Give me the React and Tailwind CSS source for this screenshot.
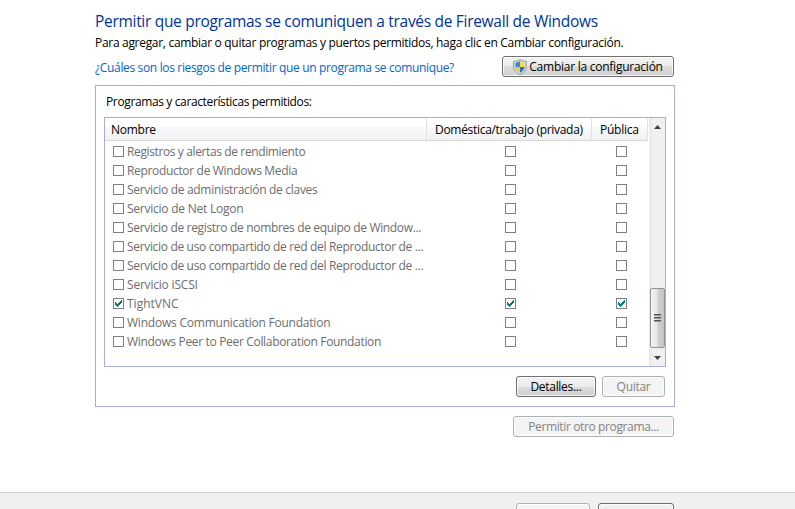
const rows = [
  { name: 'Registros y alertas de rendimiento', track: 'tracking-[-0.38px]' },
  { name: 'Reproductor de Windows Media', track: 'tracking-[-0.33px]' },
  { name: 'Servicio de administración de claves', track: 'tracking-[-0.3px]' },
  { name: 'Servicio de Net Logon', track: 'tracking-[-0.24px]' },
  { name: 'Servicio de registro de nombres de equipo de Window...', track: 'tracking-[-0.33px]' },
  { name: 'Servicio de uso compartido de red del Reproductor de ...', track: 'tracking-[-0.33px]' },
  { name: 'Servicio de uso compartido de red del Reproductor de ...', track: 'tracking-[-0.33px]' },
  { name: 'Servicio iSCSI', track: 'tracking-[-0.2px]' },
  { name: 'TightVNC', track: 'tracking-[0px]', checked: true },
  { name: 'Windows Communication Foundation', track: 'tracking-[-0.22px]' },
  { name: 'Windows Peer to Peer Collaboration Foundation', track: 'tracking-[-0.33px]' },
];

function Box({ checked }) {
  return (
    <span className="block h-[11px] w-[11px] shrink-0 border border-[#808080] bg-white">
      {checked && (
        <svg viewBox="0 0 9 9" className="block h-[9px] w-[9px]" shapeRendering="crispEdges" fill="#008080">
          <path d="M1 3h1v3h-1zM2 4h1v3h-1zM3 5h1v3h-1zM4 4h1v3h-1zM5 3h1v3h-1zM6 2h1v3h-1zM7 1h1v3h-1z" />
        </svg>
      )}
    </span>
  );
}

function Shield() {
  return (
    <svg viewBox="0 0 14 16" className="h-4 w-[14px] shrink-0">
      <path d="M7 .5C5.200 1.700 3 2.300.6 2.300v5C.6 11 3.200 13.900 7 15.500c3.800-1.600 6.400-4.500 6.400-8.200v-5C11 2.300 8.800 1.700 7 .5z" fill="#d5dade" stroke="#8b949c" strokeWidth=".9" />
      <path d="M7 2.300C5.600 3.200 4.200 3.600 2.500 3.700V8H7z" fill="#2f8ce0" />
      <path d="M7 2.300c1.400.9 2.800 1.300 4.500 1.400V8H7z" fill="#fbd840" />
      <path d="M2.500 8c.3 2.500 1.900 4.400 4.500 5.700V8z" fill="#f8ca2c" />
      <path d="M11.500 8c-.3 2.500-1.900 4.400-4.500 5.700V8z" fill="#1f74cc" />
    </svg>
  );
}

const enabled = 'border-[#707070] bg-[linear-gradient(#f2f2f2,#ebebeb_50%,#dddddd_50%,#cfcfcf)] text-black';
const disabled = 'border-[#adb2b5] bg-[#f4f4f4] text-[#838383]';

function Button({ off, className, children }) {
  return (
    <button className={`flex h-[21px] shrink-0 items-center justify-center rounded-[3px] border whitespace-nowrap shadow-[inset_0_0_0_1px_rgba(255,255,255,0.75)] ${off ? disabled : enabled} ${className}`}>
      {children}
    </button>
  );
}

export default function App() {
  return (
    <div className="flex h-[509px] w-[795px] flex-col overflow-hidden bg-white font-['Open_Sans','Noto_Sans',sans-serif] text-[12px] leading-[19px] text-black">
      <main className="flex h-[492px] shrink-0 flex-col pl-[95px]">
        <h1 className="mt-[9px] h-6 text-[15.5px] leading-6 tracking-[-0.3px] whitespace-nowrap text-[#003399]">
          Permitir que programas se comuniquen a través de Firewall de Windows
        </h1>
        <p className="h-[19px] tracking-[-0.305px] whitespace-nowrap">
          Para agregar, cambiar o quitar programas y puertos permitidos, haga clic en Cambiar configuración.
        </p>
        <div className="mt-1 flex h-[21px] w-[579px] justify-between">
          <a className="mt-[2px] tracking-[-0.345px] whitespace-nowrap text-[#0066cc]">¿Cuáles son los riesgos de permitir que un programa se comunique?</a>
          <Button className="w-[172px] gap-[2px] tracking-[-0.25px]">
            <Shield />
            <span>Cambiar la configuración</span>
          </Button>
        </div>

        <section className="mt-2 h-[322px] w-[580px] shrink-0 border border-[#abadd9] pl-2">
          <h2 className="mt-[6px] h-[19px] pl-[2px] tracking-[-0.37px]">Programas y características permitidos:</h2>
          <div className="mt-[6px] flex h-[250px] w-[562px] border border-[#abadd9]">
            <div className="w-[544px] shrink-0">
              <div className="flex h-[23px] w-[543px] border-b border-[#d5d5d5] bg-[linear-gradient(#ffffff,#ffffff_40%,#f7f8fa_40%,#f1f2f4)] leading-[23px] tracking-[-0.25px] whitespace-nowrap">
                <div className="w-[322px] border-r border-[#dfe1e4] pl-[6px]">Nombre</div>
                <div className="w-[165px] border-r border-[#dfe1e4] pl-2 tracking-[-0.3px]">Doméstica/trabajo (privada)</div>
                <div className="w-14 border-r border-[#dfe1e4] pl-2">Pública</div>
              </div>
              <ul className="mt-[1px]">
                {rows.map((row, i) => (
                  <li key={i} className="flex h-[19px] items-center pl-2">
                    <Box checked={row.checked} />
                    <span className={`ml-[3px] w-[378px] whitespace-nowrap text-[#6d6d6d] ${row.track}`}>{row.name}</span>
                    <Box checked={row.checked} />
                    <span className="w-[100px]" />
                    <Box checked={row.checked} />
                  </li>
                ))}
              </ul>
            </div>
            <div className="flex w-4 flex-col items-center bg-[linear-gradient(90deg,#e8e8e8,#f0f0f0_30%,#f0f0f0)]">
              <svg viewBox="0 0 7 4" className="mt-[7px] h-1 w-[7px]"><path d="M3.500 0L7 4H0z" fill="#404040" /></svg>
              <div className="mt-[159px] flex h-[60px] w-[15px] flex-col items-center justify-center gap-[1px] rounded-[2px] border border-[#959595] bg-[linear-gradient(90deg,#f4f4f4,#e6e6e6_48%,#cfd0d2_52%,#c4c5c8)]">
                <i className="h-[2px] w-[7px] border-b border-[#9b9b9b] bg-[#505050]" />
                <i className="h-[2px] w-[7px] border-b border-[#9b9b9b] bg-[#505050]" />
                <i className="h-[2px] w-[7px] border-b border-[#9b9b9b] bg-[#505050]" />
              </div>
              <svg viewBox="0 0 7 4" className="mt-2 h-1 w-[7px]"><path d="M0 0h7L3.500 4z" fill="#404040" /></svg>
            </div>
          </div>
          <div className="mt-[9px] flex w-[561px] justify-end gap-[6px]">
            <Button className="w-20 tracking-[-0.3px]">Detalles...</Button>
            <Button off className="w-[63px] tracking-[-0.3px]">Quitar</Button>
          </div>
        </section>
        <div className="mt-[9px] flex w-[579px] justify-end">
          <Button off className="w-[161px] tracking-[-0.37px]">Permitir otro programa...</Button>
        </div>
      </main>
      <footer className="flex h-[17px] w-full shrink-0 gap-2 overflow-hidden border-t border-[#cccccc] bg-[#f0f0f0] pt-[10px] pl-[516px]">
        <Button off className="w-[74px]" />
        <Button className="w-[76px]" />
      </footer>
    </div>
  );
}
